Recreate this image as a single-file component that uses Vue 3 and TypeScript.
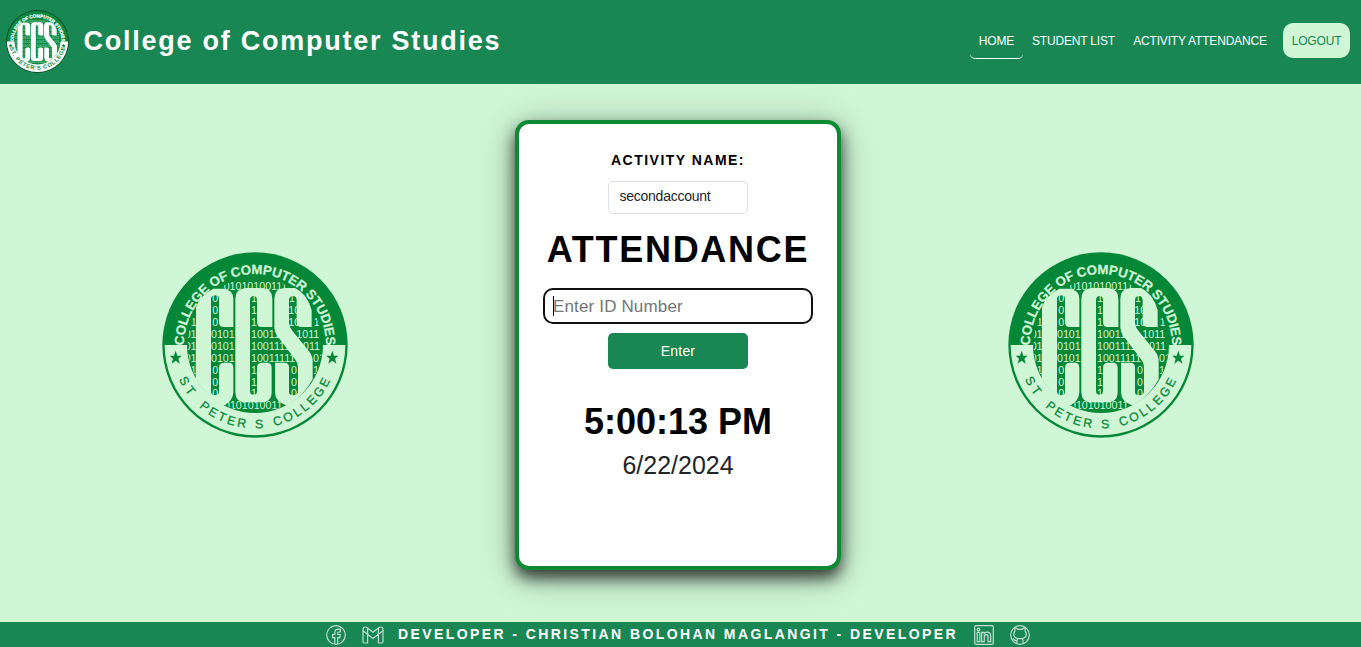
<script setup lang="ts">
import { computed, defineComponent, h, ref } from 'vue'

interface NavItem {
  label: string
  kind: string
}

const nav: NavItem[] = [
  { label: 'HOME', kind: 'active' },
  { label: 'STUDENT LIST', kind: 'students' },
  { label: 'ACTIVITY ATTENDANCE', kind: 'activity' },
]

const activity = ref('secondaccount')
const now = new Date(2024, 5, 22, 17, 0, 13)
const time = computed(() => now.toLocaleTimeString('en-US').replace(/\u202f/g, ' '))
const date = computed(() => now.toLocaleDateString('en-US'))

/* Binary digits shown between the letters: x, baseline y, digits. */
const digits: [number, number, string][] = [
  [206, 133, '01010100111'],
  [172, 169, '0'], [288, 169, '1'], [402, 169, '1'],
  [172, 205, '0'], [288, 205, '1'], [400, 205, '10'],
  [107, 241, '1'], [172, 241, '0'], [288, 241, '1'], [400, 241, '10'], [476, 241, '1'],
  [89, 277, '01'], [168, 277, '0101'], [288, 277, '10011'], [424, 277, '1011'],
  [89, 313, '01'], [168, 313, '0101'], [288, 313, '1001111'], [444, 313, '011'],
  [89, 349, '01'], [168, 349, '0101'], [288, 349, '10011111'], [474, 349, '01'],
  [89, 385, '01'], [172, 385, '0'], [288, 385, '1'], [408, 385, '0'], [474, 385, '1'],
  [172, 421, '0'], [288, 421, '1'], [408, 421, '0'],
  [172, 456, '0'], [288, 456, '1'], [408, 456, '0'],
  [207, 492, '0101010011'],
]
const letters = [
  'M123 186Q135 150 175 130H206Q235 134 235 160V245H206Q192 245 192 230V160Q192 150 180 150Q168 150 168 162V440Q170 450 180 450Q192 450 192 440V366Q192 352 208 352H222Q235 352 235 368V440Q235 468 205 481A204 204 0 0 1 122 400Z',
  'M241 160Q241 130 272 128H322Q352 130 352 160V245H320Q306 245 306 230V166Q306 152 296 152Q285 152 285 166V436Q285 448 296 448Q306 448 306 436V366Q306 352 322 352H336Q350 352 350 368V440Q350 471 318 471H272Q241 471 241 440Z',
  'M358 160Q358 130 388 128H420Q456 144 470 195V245H440Q425 245 425 230V166Q425 152 414 152Q402 152 402 166V232Q402 244 412 256L462 318Q473 332 473 348V402A204 204 0 0 1 396 481Q360 470 360 440V352H388Q402 352 402 366V440Q402 450 414 450Q429 450 429 438V366Q429 352 420 342L370 276Q358 260 358 244Z',
]
const stars = [
  'M62 316L67 331H80L70 340L74 355L62 346L50 355L54 340L44 331H57Z',
  'M532 316L537 331H550L540 340L544 355L532 346L520 355L524 340L514 331H527Z',
]

/* Round college emblem: `solid` gives the white badge used in the header. */
const Seal = defineComponent({
  props: { solid: Boolean, uid: { type: String, required: true } },
  setup(props) {
    return () => {
      const green = props.solid ? '#0a8a3f' : '#058738'
      const light = props.solid ? '#ffffff' : '#cff6d5'
      const font = 'Liberation Sans, Arial, sans-serif'
      const top = `${props.uid}-top`
      const bottom = `${props.uid}-bottom`
      const clip = `${props.uid}-clip`
      const words: [string, string, number][] = [
        ['ST', '18%', 12],
        ['PETER', '37%', 8],
        ['S', '51.7%', 0],
        ['COLLEGE', '72.2%', 8],
      ]
      const curved = props.solid
        ? [
            h('text', { 'font-family': font, 'font-weight': 700, 'font-size': 50, fill: green, 'text-anchor': 'middle', 'letter-spacing': 7 }, [
              h('textPath', { href: `#${bottom}`, startOffset: '50.5%' }, "ST. PETER'S COLLEGE"),
            ]),
          ]
        : words.map(([word, offset, gap]) =>
            h('text', { 'font-family': font, 'font-size': 37, fill: green, stroke: green, 'stroke-width': 0.8, 'text-anchor': 'middle', 'letter-spacing': gap }, [
              h('textPath', { href: `#${bottom}`, startOffset: offset }, word),
            ]),
          )
      return h('svg', { viewBox: '21 20 558 558' }, [
        h('defs', [
          h('path', { id: top, d: 'M87 299A213 213 0 0 1 513 299' }),
          h('path', { id: bottom, d: 'M50 299A250 250 0 0 0 550 299' }),
          h('clipPath', { id: clip }, [h('circle', { cx: 300, cy: 299, r: 202 })]),
        ]),
        h('circle', { cx: 300, cy: 299, r: 278, fill: props.solid ? '#0b4a2a' : green }),
        props.solid ? h('circle', { cx: 300, cy: 299, r: 270, fill: green }) : null,
        h('path', { d: 'M29 299A271 271 0 0 0 571 299H504A204 204 0 0 1 96 299Z', fill: light }),
        h(
          'g',
          { 'clip-path': `url(#${clip})`, fill: light, 'fill-opacity': props.solid ? 0.6 : 1, 'font-family': font, 'font-size': 32 },
          digits.map(([x, y, value]) => h('text', { x, y }, value)),
        ),
        ...letters.map((d) => h('path', { d, fill: light })),
        ...stars.map((d) => h('path', { d, fill: green })),
        h('text', { 'font-family': font, 'font-weight': 700, 'font-size': 40, fill: light, stroke: light, 'stroke-width': props.solid ? 2 : 0.6, 'text-anchor': 'middle', 'letter-spacing': -0.5 }, [
          h('textPath', { href: `#${top}`, startOffset: '50%' }, 'COLLEGE OF COMPUTER STUDIES'),
        ]),
        ...curved,
      ])
    }
  },
})
</script>

<template>
  <div class="page">
    <header class="topbar">
      <Seal class="brand-seal" uid="brand" solid />
      <h1 class="brand">College of Computer Studies</h1>
      <nav class="nav">
        <a v-for="item in nav" :key="item.label" class="link" :class="item.kind">{{ item.label }}</a>
        <a class="logout">LOGOUT</a>
      </nav>
    </header>

    <main class="stage">
      <Seal class="seal" uid="left" />
      <section class="card">
        <h2 class="caption">ACTIVITY NAME:</h2>
        <div class="activity-name">{{ activity }}</div>
        <h2 class="heading">ATTENDANCE</h2>
        <div class="entry"><span class="caret"></span><span class="hint">Enter ID Number</span></div>
        <button class="enter" type="button">Enter</button>
        <div class="clock">{{ time }}</div>
        <div class="date">{{ date }}</div>
      </section>
      <Seal class="seal" uid="right" />
    </main>

    <footer class="footer">
      <svg class="icon facebook" viewBox="0 0 20 20">
        <circle cx="10" cy="10" r="9.3" />
        <path d="M8.8 18.8V12.6H6.6V9.5H8.8V7.9Q8.8 4.2 12.2 4.2H14.3V7H12.8Q11.7 7 11.7 8.1V9.5H14.2L13.8 12.6H11.7V18.8" />
      </svg>
      <svg class="icon gmail" viewBox="0 0 22 18">
        <path d="M1 3.5Q1 1 3.3 1Q4.3 1 5.2 1.8L11 6.3L16.8 1.8Q17.7 1 18.7 1Q21 1 21 3.5V15.5Q21 17 19.5 17H16.4V8.3L11 12.5L5.6 8.3V17H2.5Q1 17 1 15.5ZM1 4.8L5.6 8.3V2.1M21 4.8L16.4 8.3V2.1" />
      </svg>
      <p class="credit">DEVELOPER - CHRISTIAN BOLOHAN MAGLANGIT - DEVELOPER</p>
      <svg class="icon linkedin" viewBox="0 0 20 20">
        <rect x=".7" y=".7" width="18.6" height="18.6" rx="1.2" />
        <path d="M3.2 7.4H5.8V16.6H3.2ZM7.6 7.4H10.2V8.5Q11 7.2 12.9 7.2Q16.7 7.2 16.7 11.2V16.6H14V11.8Q14 9.6 12.3 9.6Q10.3 9.6 10.3 11.8V16.6H7.6Z" />
        <circle cx="4.5" cy="4.5" r="1.3" />
      </svg>
      <svg class="icon github" viewBox="0 0 20 20">
        <circle cx="10" cy="10" r="9.3" />
        <path d="M7 18.6V15.9Q4.6 16 3.4 13.4M7 15.9Q7 14.4 7.8 13.6Q3.8 13 3.8 9Q3.8 7.2 4.9 6Q4.4 4.4 5.2 2.9Q6.7 3.2 8 4.3H12Q13.3 3.2 14.8 2.9Q15.6 4.4 15.1 6Q16.2 7.2 16.2 9Q16.2 13 12.2 13.6Q13 14.4 13 15.9V18.6M7.8 13.6H12.2" />
      </svg>
    </footer>
  </div>
</template>

<style>
body {
  margin: 0;
  background: #cff6d5;
}
</style>

<style scoped>
.page {
  display: flex;
  flex-direction: column;
  width: 1361px;
  height: 647px;
  overflow: hidden;
  background: #cff6d5;
  font-family: 'Liberation Sans', Arial, sans-serif;
}
.topbar {
  display: flex;
  align-items: center;
  box-sizing: border-box;
  height: 84px;
  padding: 0 11px 0 6px;
  background: #198754;
}
.brand-seal {
  width: 63px;
  height: 63px;
  margin-bottom: 1px;
}
.brand {
  margin: 0 0 2px 14.5px;
  color: #fff;
  font-size: 27px;
  line-height: 34px;
  letter-spacing: 1.75px;
  white-space: nowrap;
}
.nav {
  display: flex;
  margin: 0 0 2px auto;
  font-size: 12px;
  line-height: 18px;
  letter-spacing: -0.18px;
  white-space: nowrap;
}
.link,
.logout {
  box-sizing: border-box;
  height: 36px;
  padding: 9px 0 0;
  text-align: center;
}
.link {
  color: #fff;
}
.active {
  width: 53px;
  border-bottom: 1px solid #fff;
  border-radius: 5px;
}
.students {
  width: 101px;
}
.activity {
  width: 152px;
}
.logout {
  width: 67px;
  height: 35px;
  margin-left: 7px;
  border-radius: 10px;
  background: #cff6d5;
  color: #198754;
}
.stage {
  display: flex;
  flex: 1;
  align-items: center;
  gap: 167px;
  padding: 0 0 16px 162px;
}
.seal {
  flex: none;
  width: 186px;
  height: 186px;
}
.card {
  display: flex;
  flex: none;
  flex-direction: column;
  align-items: center;
  box-sizing: border-box;
  width: 326px;
  height: 450px;
  padding-top: 26px;
  border: 4px solid #0c8a34;
  border-radius: 14px;
  background: #fff;
  box-shadow: 0 8px 16px rgba(0, 0, 0, 0.72), 0 6px 40px rgba(0, 0, 0, 0.25);
}
.caption {
  margin: 0;
  color: #000;
  font-size: 14px;
  line-height: 20px;
  letter-spacing: 1.48px;
}
.activity-name {
  box-sizing: border-box;
  width: 140px;
  height: 33px;
  margin-top: 11px;
  padding: 4px 10.5px;
  border: 1px solid #dee2e6;
  border-radius: 5px;
  color: #212529;
  font-size: 14px;
  line-height: 20px;
  letter-spacing: -0.25px;
}
.heading {
  margin: 14px 0 0;
  color: #000;
  font-size: 36px;
  line-height: 44px;
  letter-spacing: 1.7px;
}
.entry {
  display: flex;
  align-items: center;
  box-sizing: border-box;
  width: 270px;
  height: 36px;
  margin-top: 16px;
  padding-left: 8px;
  border: 2px solid #101010;
  border-radius: 10px;
}
.caret {
  width: 1px;
  height: 20px;
  margin-right: -1px;
  background: #000;
}
.hint {
  padding-top: 2px;
  color: #757575;
  font-size: 17px;
  line-height: 20px;
  letter-spacing: 0.15px;
}
.enter {
  width: 140px;
  height: 36px;
  margin-top: 9px;
  padding: 0;
  border: 0;
  border-radius: 5px;
  background: #198754;
  color: #fff;
  font: 14px/20px 'Liberation Sans', Arial, sans-serif;
  letter-spacing: 0.2px;
}
.clock {
  margin-top: 31px;
  color: #000;
  font-size: 36px;
  font-weight: 700;
  line-height: 44px;
}
.date {
  margin-top: 6px;
  color: #212529;
  font-size: 25px;
  line-height: 30px;
}
.footer {
  display: flex;
  align-items: center;
  height: 25px;
  padding-left: 326px;
  background: #198754;
}
.icon {
  flex: none;
  width: 20px;
  height: 20px;
  margin-top: 1px;
  fill: none;
  stroke: #c2dfd1;
  stroke-width: 1.2;
}
.gmail {
  width: 22px;
  height: 18px;
  margin-left: 16px;
}
.credit {
  width: 576px;
  margin: 0 0 1px;
  padding-left: 14px;
  color: #fff;
  font-size: 14px;
  font-weight: 700;
  line-height: 24px;
  letter-spacing: 2.41px;
  white-space: nowrap;
  box-sizing: border-box;
}
.linkedin {
  margin-left: 14px;
}
.github {
  margin-left: 16px;
}
</style>
